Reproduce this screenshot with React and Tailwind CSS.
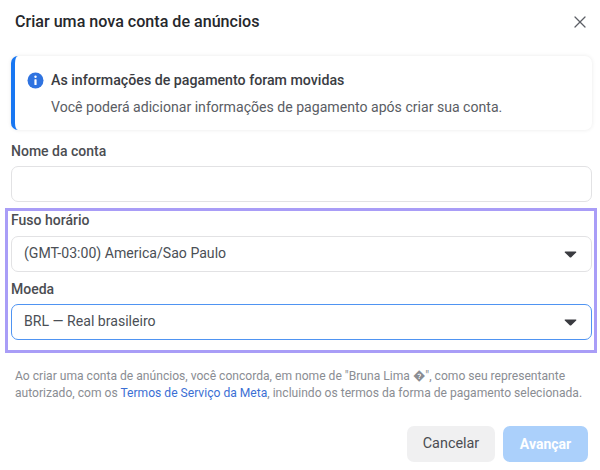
import { X } from "lucide-react";

function Caret() {
  return (
    <svg width="13" height="7" viewBox="0 0 14 8" className="shrink-0">
      <path d="M1 0.5h12c.6 0 .9.6.5 1.1L7.6 7.3c-.3.3-.9.3-1.2 0L.5 1.6C.1 1.1.4.5 1 .5z" fill="#3a3b40" />
    </svg>
  );
}

function Select({ value, focused }) {
  return (
    <div
      className={
        "flex items-center justify-between h-[36px] rounded-[7px] border pl-[12px] pr-[14px] text-[14.1px] text-[#4b4f56] " +
        (focused ? "border-[#4f94f2]" : "border-[#e2e2e4]")
      }
    >
      <span>{value}</span>
      <Caret />
    </div>
  );
}

export default function App() {
  return (
    <div className="w-[600px] h-[470px] bg-white overflow-hidden font-['Roboto',sans-serif] pl-[11px] pr-[8px]">
      {/* Header */}
      <div className="flex items-center justify-between h-[44px] pl-[4px] pr-[2px]">
        <h1 className="text-[16.1px] font-medium text-[#26282c]">Criar uma nova conta de anúncios</h1>
        <X size={20} strokeWidth={1.5} className="text-[#5c5f66]" />
      </div>

      {/* Notice */}
      <div className="mt-[12px] h-[74px] rounded-[7px] border-l-[4px] border-[#1877f2] bg-white shadow-[0_0_4px_rgba(0,0,0,0.09)] pl-[12px] pr-[12px] pt-[14px]">
        <div className="flex items-center gap-[7px]">
          <svg width="17" height="17" viewBox="0 0 17 17" className="shrink-0">
            <circle cx="8.5" cy="8.5" r="8" fill="#2f73e0" />
            <circle cx="8.5" cy="4.8" r="1.2" fill="#fff" />
            <rect x="7.4" y="7.2" width="2.2" height="5.8" rx="0.6" fill="#fff" />
          </svg>
          <span className="text-[14.2px] font-medium text-[#3a3c42]">As informações de pagamento foram movidas</span>
        </div>
        <p className="mt-[6px] ml-[24px] text-[14.1px] text-[#5a5d64]">Você poderá adicionar informações de pagamento após criar sua conta.</p>
      </div>

      {/* Account name */}
      <label className="block mt-[12px] text-[14px] leading-[18px] font-medium text-[#4b4d52]">Nome da conta</label>
      <div className="mt-[6px] h-[36px] rounded-[7px] border border-[#e2e2e4]" />

      {/* Highlighted fields */}
      <div className="mt-[6px] -ml-[6px] -mr-[5px] h-[145px] border-[3px] border-[#a99df7] pl-[3px] pr-[2px]">
        <div className="text-[14px] leading-[18px] font-medium text-[#4b4d52]">Fuso horário</div>
        <div className="mt-[7px]">
          <Select value="(GMT-03:00) America/Sao Paulo" />
        </div>
        <div className="mt-[8px] text-[14px] leading-[18px] font-medium text-[#4b4d52]">Moeda</div>
        <div className="mt-[6px]">
          <Select value="BRL — Real brasileiro" focused />
        </div>
      </div>

      {/* Terms */}
      <p className="mt-[15px] ml-[4px] text-[12.1px] leading-[17px] text-[#8a8d93]">
        Ao criar uma conta de anúncios, você concorda, em nome de "Bruna Lima �", como seu representante
        <br />
        autorizado, com os <span className="text-[#3b6fd4]">Termos de Serviço da Meta</span>, incluindo os termos da forma de pagamento selecionada.
      </p>

      {/* Actions */}
      <div className="mt-[24px] flex justify-end gap-[8px] pr-[4px]">
        <button className="w-[88px] h-[36px] rounded-[7px] bg-[#f0f0f1] text-[14.4px] font-normal text-[#4b4d52]">Cancelar</button>
        <button className="w-[85px] h-[36px] rounded-[7px] bg-[#abd0fb] text-[14px] font-bold text-white">Avançar</button>
      </div>
    </div>
  );
}
